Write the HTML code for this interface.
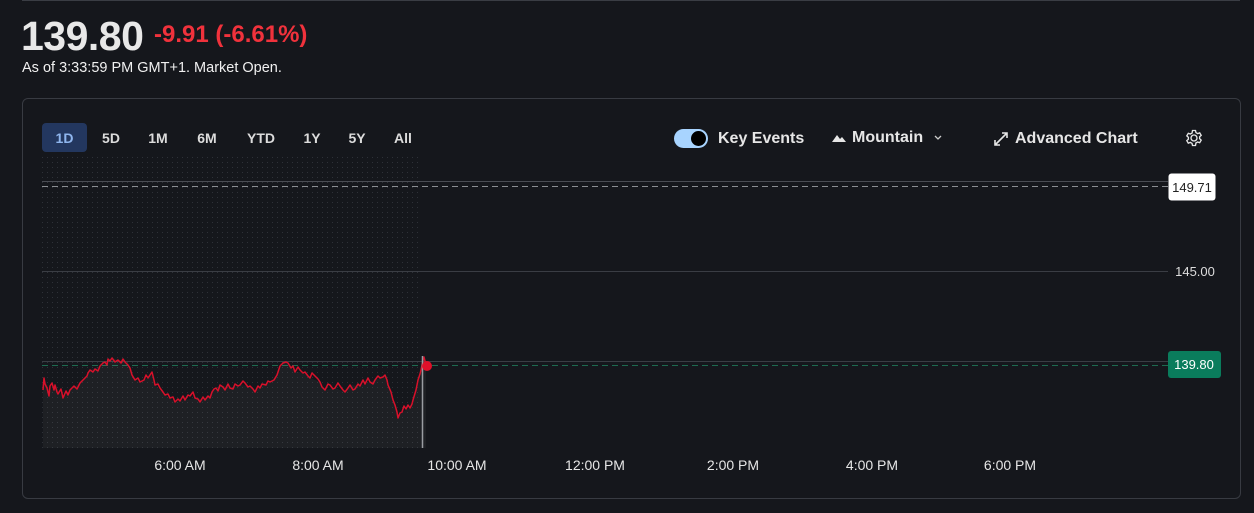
<!DOCTYPE html>
<html><head><style>
body{margin:0;width:1254px;height:513px;background:#15171c;font-family:"Liberation Sans",sans-serif;color:#e6e6e6;position:relative;overflow:hidden}
.a{position:absolute}
.tab{position:absolute;top:124px;height:28px;line-height:28px;font-size:14px;font-weight:bold;color:#dcdcdc;text-align:center}
</style></head><body>
<div class="a" style="left:22px;top:0;width:1218px;height:1px;background:#3a3d44"></div>
<div class="a" style="left:21px;top:13px;font-size:41px;font-weight:bold;color:#e8e8e8;letter-spacing:-0.5px">139.80</div>
<div class="a" style="left:154px;top:21px;font-size:24px;font-weight:bold;color:#f0323c">-9.91 (-6.61%)</div>
<div class="a" style="left:22px;top:60px;font-size:14.5px;color:#f0f0f0">As of 3:33:59 PM GMT+1. Market Open.</div>
<div class="a" style="left:22px;top:98px;width:1217px;height:399px;border:1px solid #383b42;border-radius:6px"></div>
<div class="a" style="left:42px;top:123px;width:45px;height:29px;background:#23375f;border-radius:4px"></div>
<div class="tab" style="left:42px;width:45px;color:#8fb6ee">1D</div>
<div class="tab" style="left:96px;width:30px">5D</div>
<div class="tab" style="left:143px;width:30px">1M</div>
<div class="tab" style="left:192px;width:30px">6M</div>
<div class="tab" style="left:243px;width:36px">YTD</div>
<div class="tab" style="left:297px;width:30px">1Y</div>
<div class="tab" style="left:342px;width:30px">5Y</div>
<div class="tab" style="left:388px;width:30px">All</div>
<div class="a" style="left:674px;top:129px;width:34px;height:19px;background:#a8d4ff;border-radius:10px"></div>
<div class="a" style="left:691px;top:131px;width:15px;height:15px;background:#000;border-radius:50%"></div>
<div class="a" style="left:718px;top:130px;font-size:16px;font-weight:bold">Key Events</div>
<svg class="a" style="left:831px;top:133px" width="16" height="10"><path d="M1 9 L6 2 L9 6 L11 4 L15 9Z" fill="#e6e6e6"/></svg>
<div class="a" style="left:852px;top:129px;font-size:16px;font-weight:bold">Mountain</div>
<svg class="a" style="left:933px;top:134px" width="10" height="8"><path d="M2 2 L5 5 L8 2" stroke="#ccc" fill="none" stroke-width="1.3"/></svg>
<svg class="a" style="left:993px;top:131px" width="16" height="16"><path d="M2 14 L14 2 M9 2 H14 V7 M2 9 V14 H7" stroke="#e6e6e6" fill="none" stroke-width="1.6"/></svg>
<div class="a" style="left:1015px;top:130px;font-size:16px;font-weight:bold">Advanced Chart</div>
<svg class="a" style="left:1185px;top:129px" width="18" height="18" viewBox="0 0 24 24"><path d="M12 8a4 4 0 1 0 0 8a4 4 0 1 0 0-8zM10 2h4l.6 2.8 2.3 1.3 2.7-1 2 3.4-2.1 1.9v2.6l2.1 1.9-2 3.4-2.7-1-2.3 1.3L14 22h-4l-.6-2.8-2.3-1.3-2.7 1-2-3.4 2.1-1.9V11L2.4 9.1l2-3.4 2.7 1 2.3-1.3z" fill="none" stroke="#e6e6e6" stroke-width="1.8"/></svg>
<svg class="a" style="left:0;top:0" width="1254" height="513">
<defs><pattern id="d" width="5" height="5" patternUnits="userSpaceOnUse"><rect x="2" y="2" width="1" height="1" fill="#2e3138"/></pattern></defs>
<rect x="42" y="157" width="378" height="291" fill="url(#d)"/>
<line x1="42" y1="181.5" x2="1168" y2="181.5" stroke="#4a4d54"/>
<line x1="42" y1="186.5" x2="1168" y2="186.5" stroke="#8a8d92" stroke-dasharray="6 4"/>
<line x1="42" y1="271.5" x2="1168" y2="271.5" stroke="#3a3d44"/>
<line x1="42" y1="361.5" x2="1168" y2="361.5" stroke="#3a3d44"/>
<line x1="42" y1="365.5" x2="1168" y2="365.5" stroke="#1d6b50" stroke-dasharray="6 4"/>
<polygon fill="rgba(255,255,255,0.04)" points="43,448 43,390 45,380 50,392 55,385 63,398 70,390 80,383 85,378 90,370 100,366 105,362 112,358 118,360 125,362 130,368 135,380 140,382 148,378 152,372 155,385 165,395 175,402 185,400 195,398 205,400 212,392 220,385 230,388 240,385 250,386 255,392 262,384 270,382 277,375 283,363 288,363 295,372 305,372 310,378 320,382 325,390 335,388 345,392 350,385 360,386 370,382 380,378 385,375 388,385 395,405 398,418 402,412 410,408 413,400 418,380 421,370 424,357 426,365 426,448"/>
<polyline fill="none" stroke="#d8102a" stroke-width="1.5" stroke-linejoin="round" points="43,390 44,378 45,384 47,388 49,396 50,386 52,383 54,390 55,385 57,392 58,394 61,389 63,398 66,391 68,395 70,390 72,388 74,386 77,389 80,383 83,380 85,378 87,376 88,373 90,370 93,372 95,369 98,371 100,366 103,363 105,362 107,365 108,359 110,361 112,358 115,362 118,360 121,363 123,359 125,362 128,365 130,368 132,375 135,380 138,378 140,382 144,380 146,375 148,378 150,375 152,372 154,380 155,385 158,384 160,388 163,392 165,395 168,394 170,398 173,397 175,402 178,399 180,401 183,396 185,400 188,395 190,396 193,392 195,398 198,399 200,402 203,397 205,400 208,396 210,398 212,392 214,389 216,388 218,391 220,385 223,387 225,390 228,384 230,388 233,389 235,384 238,386 240,385 243,381 245,383 248,387 250,386 253,389 255,392 258,386 260,388 262,384 266,385 268,381 270,382 274,380 277,375 280,366 283,363 286,362 288,363 291,368 293,366 295,372 298,367 300,370 303,373 305,372 308,376 310,378 312,373 315,376 318,379 320,382 322,387 325,390 328,384 330,385 333,389 335,388 338,383 340,386 343,390 345,392 348,388 350,385 353,390 355,389 358,384 360,386 363,380 365,384 368,378 370,382 373,384 375,380 378,376 380,378 383,377 385,375 387,380 388,385 391,392 393,400 395,405 397,412 398,418 400,413 402,412 404,406 406,409 408,405 410,408 412,404 413,400 416,390 418,380 420,374 421,370 423,360 424,357 426,365"/>
<line x1="422.5" y1="356" x2="422.5" y2="448" stroke="#9a9da2" stroke-width="1.5"/>
<circle cx="427" cy="366" r="5" fill="#e0102a"/>
<g font-size="14" fill="#e6e6e6" font-family="Liberation Sans" text-anchor="middle">
<text x="180" y="470">6:00 AM</text><text x="318" y="470">8:00 AM</text><text x="457" y="470">10:00 AM</text><text x="595" y="470">12:00 PM</text><text x="733" y="470">2:00 PM</text><text x="872" y="470">4:00 PM</text><text x="1010" y="470">6:00 PM</text>
</g>
<rect x="1168.5" y="173.5" width="47" height="27" rx="3" fill="#fff"/>
<text x="1192" y="192" font-size="13" fill="#222" text-anchor="middle" font-family="Liberation Sans">149.71</text>
<text x="1195" y="276" font-size="13" fill="#ddd" text-anchor="middle" font-family="Liberation Sans">145.00</text>
<rect x="1168" y="351" width="53" height="27" rx="3" fill="#0a7c5c"/>
<text x="1194" y="369" font-size="13" fill="#fff" text-anchor="middle" font-family="Liberation Sans">139.80</text>
</svg>
</body></html>
